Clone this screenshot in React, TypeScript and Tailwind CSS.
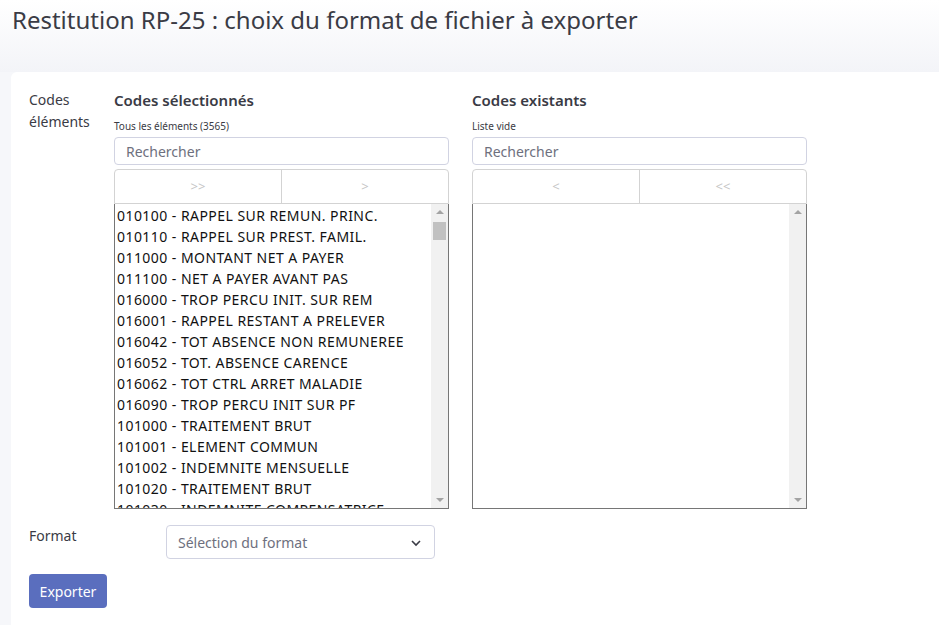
import React from 'react';

const codes = [
  '010100 - RAPPEL SUR REMUN. PRINC.',
  '010110 - RAPPEL SUR PREST. FAMIL.',
  '011000 - MONTANT NET A PAYER',
  '011100 - NET A PAYER AVANT PAS',
  '016000 - TROP PERCU INIT. SUR REM',
  '016001 - RAPPEL RESTANT A PRELEVER',
  '016042 - TOT ABSENCE NON REMUNEREE',
  '016052 - TOT. ABSENCE CARENCE',
  '016062 - TOT CTRL ARRET MALADIE',
  '016090 - TROP PERCU INIT SUR PF',
  '101000 - TRAITEMENT BRUT',
  '101001 - ELEMENT COMMUN',
  '101002 - INDEMNITE MENSUELLE',
  '101020 - TRAITEMENT BRUT',
  '101030 - INDEMNITE COMPENSATRICE',
];

function Scrollbar({ thumb }: { thumb: boolean }) {
  return (
    <div className="relative w-[17px] shrink-0 bg-[#f1f1f1]">
      {/* up arrow */}
      <div className="absolute left-[5px] top-[6px] w-0 h-0 border-l-[4px] border-r-[4px] border-b-[4px] border-l-transparent border-r-transparent border-b-[#a3a3a3]" />
      {thumb && <div className="absolute left-[2px] top-[18px] w-[13px] h-[18px] bg-[#c1c1c1]" />}
      {/* down arrow */}
      <div className="absolute left-[5px] bottom-[6px] w-0 h-0 border-l-[4px] border-r-[4px] border-t-[4px] border-l-transparent border-r-transparent border-t-[#a3a3a3]" />
    </div>
  );
}

interface DualColumnProps {
  title: string;
  subtitle: string;
  buttons: [string, string];
  items: string[];
}

function DualColumn({ title, subtitle, buttons, items }: DualColumnProps) {
  return (
    <div className="w-[335px] flex flex-col">
      <h2 className="text-[15px] leading-[22px] font-semibold text-[#3a3b45]">{title}</h2>
      <div className="mt-[8px] text-[10px] leading-[14px] text-[#3a3b45]">{subtitle}</div>
      <input
        className="mt-[4px] h-[28px] w-full rounded-[4px] border border-[#d1d3e2] px-[11px] text-[14px] text-[#6e707e] placeholder:text-[#6e707e] outline-none"
        placeholder="Rechercher"
      />
      <div className="mt-[4px] flex h-[35px] rounded-t-[4px] border border-[#d3d3d3]">
        <button className="flex-1 text-[13px] text-[#c5c5c5] border-r border-[#d3d3d3]">{buttons[0]}</button>
        <button className="flex-1 text-[13px] text-[#c5c5c5]">{buttons[1]}</button>
      </div>
      <div className="flex h-[305px] border-l border-r border-b border-[#767676] bg-white overflow-hidden">
        <div className="flex-1 overflow-hidden pl-[2px] pt-[1px]">
          {items.map((item) => (
            <div
              key={item}
              className="h-[21px] text-[14px] leading-[21px] tracking-[0.45px] text-[#111] whitespace-nowrap"
            >
              {item}
            </div>
          ))}
        </div>
        <Scrollbar thumb={items.length > 0} />
      </div>
    </div>
  );
}

export default function App() {
  return (
    <div className="min-h-screen bg-[#f6f7fa] font-['Noto_Sans',sans-serif] text-[#3a3b45]">
      {/* Header */}
      <header className="h-[72px] bg-gradient-to-b from-white to-[#f3f4f8] px-[12px] pt-[4px]">
        <h1 className="text-[24px] leading-[32px] font-normal text-[#3a3b45]">
          Restitution RP-25 : choix du format de fichier à exporter
        </h1>
      </header>

      {/* Card */}
      <div className="ml-[11px] rounded-tl-[6px] bg-white pt-[17px] pl-[18px] pb-[30px] min-h-[560px]">
        <div className="flex">
          <div className="w-[85px] text-[14px] leading-[22px] pr-2">Codes éléments</div>
          <div className="flex gap-[23px]">
            <DualColumn
              title="Codes sélectionnés"
              subtitle="Tous les éléments (3565)"
              buttons={['>>', '>']}
              items={codes}
            />
            <DualColumn title="Codes existants" subtitle="Liste vide" buttons={['<', '<<']} items={[]} />
          </div>
        </div>

        <div className="mt-[16px] flex">
          <div className="w-[137px] text-[14px] leading-[22px]">Format</div>
          <div className="relative w-[269px] h-[34px] rounded-[4px] border border-[#d1d3e2] flex items-center px-[11px]">
            <span className="text-[14px] text-[#6e707e]">Sélection du format</span>
            <svg
              className="absolute right-[13px] top-[13px]"
              width="10"
              height="8"
              viewBox="0 0 10 8"
              fill="none"
              stroke="#3a3b45"
              strokeWidth="1.6"
            >
              <path d="M1 2l4 4 4-4" />
            </svg>
          </div>
        </div>

        <button className="mt-[15px] h-[34px] w-[78px] rounded-[4px] bg-[#5a6ebe] text-[14px] text-white">
          Exporter
        </button>
      </div>
    </div>
  );
}
